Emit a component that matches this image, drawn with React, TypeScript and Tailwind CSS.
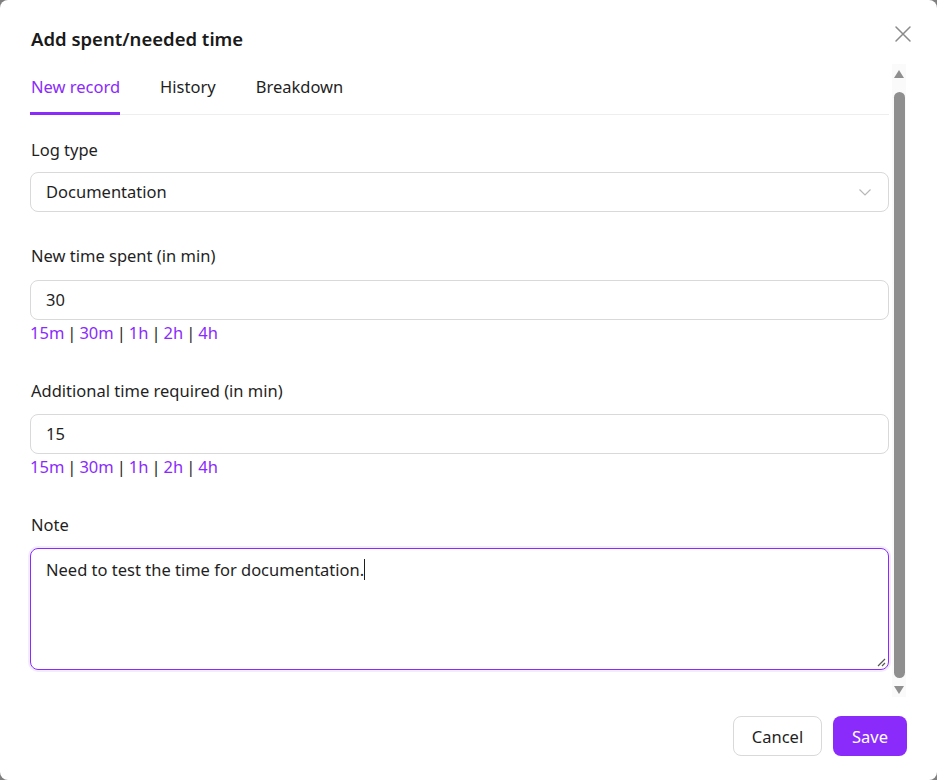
import React from "react";

const purple = "text-[#8a2bfb]";

function QuickLinks() {
  const items = ["15m", "30m", "1h", "2h", "4h"];
  return (
    <div className="mt-px flex items-center text-[16.5px] leading-6 text-[#1f1f1f]">
      {items.map((t, i) => (
        <React.Fragment key={t}>
          {i > 0 && <span className="mx-[3px]">|</span>}
          <span className={purple}>{t}</span>
        </React.Fragment>
      ))}
    </div>
  );
}

function Field({ value }: { value: string }) {
  return (
    <div className="flex h-10 items-center rounded-lg border border-[#d9d9d9] bg-white px-[15px] pt-px text-[16.5px] text-[#1f1f1f]">
      {value}
    </div>
  );
}

export default function App() {
  return (
    <div
      className="h-[780px] w-[937px] bg-[#7f7f7f]"
      style={{ fontFamily: '"Noto Sans", "Segoe UI", sans-serif' }}
    >
      <div className="flex h-full w-full flex-col rounded-lg bg-white text-[#1f1f1f]">
        {/* Header */}
        <div className="flex h-16 items-start justify-between pl-[31px] pr-[25px]">
          <h1 className="mt-[25px] text-[18.5px] font-semibold leading-7 text-[#1a1a1a]">
            Add spent/needed time
          </h1>
          <button className="mt-[25px] text-[#8a8a8a]">
            <svg width="18" height="18" viewBox="0 0 18 18" fill="none" stroke="currentColor" strokeWidth="1.5" strokeLinecap="round">
              <path d="M2 2 L16 16 M16 2 L2 16" />
            </svg>
          </button>
        </div>

        {/* Body */}
        <div className="flex h-[633px] pl-[30px] pr-[31px]">
          <div className="flex-1">
            {/* Tabs */}
            <div className="flex gap-10 border-b border-[#eeeeee] pt-[11px]">
              <div className={`-mb-px border-b-[3px] border-[#8a2bfb] pb-[13px] pl-px text-[16.5px] leading-6 ${purple}`}>
                New record
              </div>
              <div className="-mb-px border-b-[3px] border-transparent pb-[13px] text-[16.5px] leading-6 text-[#1f1f1f]">
                History
              </div>
              <div className="-mb-px border-b-[3px] border-transparent pb-[13px] text-[16.5px] leading-6 text-[#1f1f1f]">
                Breakdown
              </div>
            </div>

            <div className="pt-[23px]">
              <div className="pl-px text-[16.5px] leading-6">Log type</div>
              <div className="mt-[10px] flex h-10 items-center justify-between rounded-lg border border-[#d9d9d9] bg-white pl-[15px] pr-[16px] text-[16.5px]">
                <span className="pt-px">Documentation</span>
                <svg width="14" height="14" viewBox="0 0 14 14" fill="none" stroke="#b8b8b8" strokeWidth="1.2">
                  <path d="M1.5 4.5 L7 10 L12.5 4.5" />
                </svg>
              </div>

              <div className="mt-[32px] pl-px text-[16.5px] leading-6">New time spent (in min)</div>
              <div className="mt-[12px]">
                <Field value="30" />
              </div>
              <QuickLinks />

              <div className="mt-[34px] pl-px text-[16.5px] leading-6">Additional time required (in min)</div>
              <div className="mt-[11px]">
                <Field value="15" />
              </div>
              <QuickLinks />

              <div className="mt-[34px] pl-px text-[16.5px] leading-6">Note</div>
              <div className="relative mt-[11px] h-[122px] rounded-lg border border-[#8a2bfb] px-[15px] pt-[6px] text-[16.5px] leading-6 shadow-[0_0_0_2px_#f3ebff]">
                <span>Need to test the time for documentation.</span>
                <span className="inline-block h-[21px] w-px translate-y-[4px] bg-[#1f1f1f]" />
                <svg className="absolute bottom-[2px] right-[2px]" width="9" height="9" viewBox="0 0 9 9" stroke="#555" strokeWidth="1.2">
                  <path d="M8 1 L1 8 M8 5 L5 8" />
                </svg>
              </div>
            </div>
          </div>

          {/* Scrollbar */}
          <div className="ml-[3px] flex w-[14px] flex-col items-center bg-[#fafafa]">
            <div className="mt-[6px] h-0 w-0 border-x-[5px] border-b-[8px] border-x-transparent border-b-[#8f8f8f]" />
            <div className="mt-[14px] h-[586px] w-[11px] rounded-full bg-[#8f8f8f]" />
            <div className="mt-[8px] h-0 w-0 border-x-[5px] border-t-[8px] border-x-transparent border-t-[#8f8f8f]" />
          </div>
        </div>

        {/* Footer */}
        <div className="flex justify-end gap-[11px] pr-[30px] pt-[19px]">
          <button className="h-10 w-[89px] rounded-lg border border-[#d9d9d9] bg-white pt-[2px] text-[16.5px] text-[#1f1f1f]">
            Cancel
          </button>
          <button className="h-10 w-[74px] rounded-lg bg-[#8a2bfb] pt-[2px] text-[16.5px] text-white">
            Save
          </button>
        </div>
      </div>
    </div>
  );
}
